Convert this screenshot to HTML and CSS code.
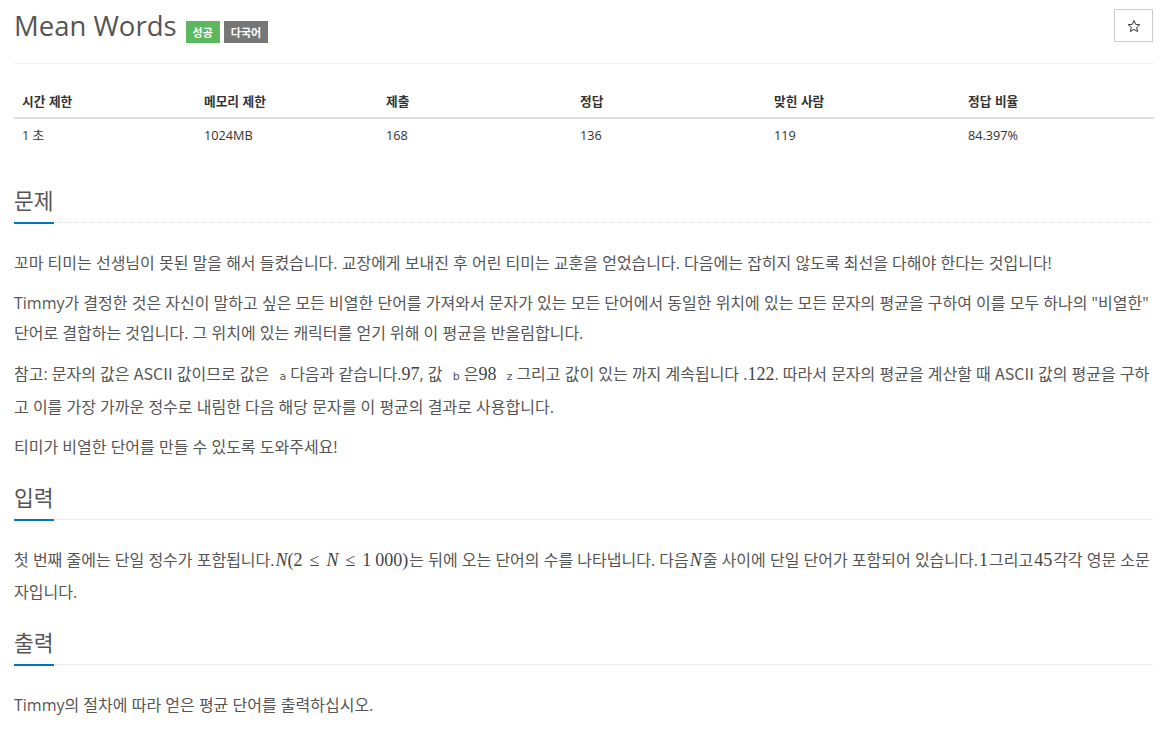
FILE: index.html
```html
<!DOCTYPE html>
<html lang="ko">
<head>
<meta charset="utf-8">
<title>Mean Words</title>
<link rel="stylesheet" href="styles.css">
</head>
<body>
<div class="page">
  <div class="page-header">
    <h1 class="title">
      <span class="title-text">Mean Words</span>
      <span class="label label-success">성공</span>
      <span class="label label-default">다국어</span>
    </h1>
    <button class="star-btn" type="button" aria-label="즐겨찾기">
      <svg width="14" height="14" viewBox="0 0 24 24"><path d="M12 2.6l2.85 6.55 7.1.62-5.38 4.7 1.6 6.96L12 17.76l-6.17 3.67 1.6-6.96-5.38-4.7 7.1-.62z" fill="none" stroke="#333" stroke-width="1.7" stroke-linejoin="round"/></svg>
    </button>
  </div>

  <table class="info">
    <colgroup>
      <col class="c1"><col class="c1"><col class="c2"><col class="c2"><col class="c2"><col class="c2">
    </colgroup>
    <thead>
      <tr><th>시간 제한</th><th>메모리 제한</th><th>제출</th><th>정답</th><th>맞힌 사람</th><th>정답 비율</th></tr>
    </thead>
    <tbody>
      <tr><td>1 초</td><td>1024MB</td><td>168</td><td>136</td><td>119</td><td>84.397%</td></tr>
    </tbody>
  </table>

  <section class="problem-section">
    <div class="headline"><h2>문제</h2></div>
    <div class="desc">
      <p>꼬마 티미는 선생님이 못된 말을 해서 들켰습니다. 교장에게 보내진 후 어린 티미는 교훈을 얻었습니다. 다음에는 잡히지 않도록 최선을 다해야 한다는 것입니다!</p>
      <p>Timmy가 결정한 것은 자신이 말하고 싶은 모든 비열한 단어를 가져와서 문자가 있는 모든 단어에서 동일한 위치에 있는 모든 문자의 평균을 구하여 이를 모두 하나의 "비열한" 단어로 결합하는 것입니다. 그 위치에 있는 캐릭터를 얻기 위해 이 평균을 반올림합니다.</p>
      <p>참고: 문자의 값은 <span class="narrow">ASCII</span> 값이므로 값은 <code class="code">a</code>다음과 같습니다.<span class="math">97</span>, 값 <code class="code">b</code>은<span class="math">98</span> <code class="code">z</code>그리고 값이 있는 까지 계속됩니다 .<span class="math">122</span>. 따라서 문자의 평균을 계산할 때 <span class="narrow">ASCII</span> 값의 평균을 구하고 이를 가장 가까운 정수로 내림한 다음 해당 문자를 이 평균의 결과로 사용합니다.</p>
      <p>티미가 비열한 단어를 만들 수 있도록 도와주세요!</p>
    </div>
  </section>

  <section class="problem-section">
    <div class="headline"><h2>입력</h2></div>
    <div class="desc">
      <p>첫 번째 줄에는 단일 정수가 포함됩니다.<span class="math spaced"><i>N</i>(2<span class="rel">≤</span><i>N</i><span class="rel">≤</span>1<span class="thin">000</span>)</span>는 뒤에 오는 단어의 수를 나타냅니다. 다음<span class="math spaced"><i>N</i></span>줄 사이에 단일 단어가 포함되어 있습니다.<span class="math spaced">1</span>그리고<span class="math spaced">45</span>각각 영문 소문자입니다.</p>
    </div>
  </section>

  <section class="problem-section">
    <div class="headline"><h2>출력</h2></div>
    <div class="desc">
      <p>Timmy의 절차에 따라 얻은 평균 단어를 출력하십시오.</p>
    </div>
  </section>
</div>
</body>
</html>
```

FILE: styles.css
```css
html, body {
  margin: 0;
  padding: 0;
  background: #fff;
}

body {
  font-family: "Open Sans", "Noto Sans CJK KR", sans-serif;
  color: #333;
}

.page {
  padding: 0 14px;
}

/* header */
.page-header {
  display: flex;
  justify-content: space-between;
  align-items: flex-start;
  padding-top: 6px;
  padding-bottom: 17px;
  border-bottom: 1px solid #eee;
}

.title {
  margin: 0;
  display: flex;
  align-items: flex-start;
  height: 40px;
  font-weight: 400;
}

.title-text {
  font-size: 27.5px;
  line-height: 40px;
  color: #555;
}

.label {
  margin-top: 15px;
  height: 22px;
  line-height: 22px;
  padding: 0 7px;
  font-family: "Noto Sans CJK KR", sans-serif;
  font-size: 11px;
  font-weight: 700;
  color: #fff;
}

.label-success {
  margin-left: 9px;
  background: #5cb85c;
}

.label-default {
  margin-left: 4px;
  background: #777;
}

.star-btn {
  margin-top: 3px;
  margin-right: 1px;
  width: 39px;
  height: 33px;
  padding: 0;
  border: 1px solid #ccc;
  border-radius: 0;
  background: #fff;
  display: flex;
  align-items: center;
  justify-content: center;
}

/* info table */
.info {
  width: 100%;
  table-layout: fixed;
  border-collapse: separate;
  border-spacing: 0;
  margin-top: 20px;
  margin-bottom: 36px;
}

.info .c1 { width: 182px; }
.info .c2 { width: 194px; }

.info th {
  text-align: left;
  font-family: "Noto Sans CJK KR", sans-serif;
  font-weight: 700;
  font-size: 12.7px;
  line-height: 17px;
  padding: 8px;
  border-bottom: 2px solid #ddd;
  color: #333;
}

.info td {
  text-align: left;
  font-size: 12.7px;
  line-height: 17px;
  padding: 8px;
  color: #333;
}

/* sections */
.headline {
  display: flex;
  margin: 23px 0 25px;
  border-bottom: 1px dotted #ddd;
}

.headline h2 {
  margin: 0 0 -2px;
  padding-bottom: 10px;
  font-family: "Noto Sans CJK KR", sans-serif;
  font-size: 21.5px;
  line-height: 24px;
  font-weight: 400;
  color: #555;
  border-bottom: 2px solid #0076c0;
}

.desc p {
  margin: 0 0 10px;
  font-size: 16px;
  line-height: 30px;
  color: #555;
}

.narrow {
  font-family: "Noto Sans CJK KR", sans-serif;
}

.code {
  font-family: "DejaVu Sans", sans-serif;
  font-size: 11px;
  color: #555;
  padding: 0 4px 0 6px;
}

.math {
  display: inline-block;
  font-family: "Liberation Serif", "Times New Roman", serif;
  font-size: 18px;
  line-height: 18px;
  padding-bottom: 8px;
  color: #444;
}

.math.spaced {
  padding-left: 1px;
  padding-right: 1px;
}

.math i {
  font-style: italic;
}

.rel {
  margin: 0 7px;
}

.thin {
  margin-left: 4px;
}
```
